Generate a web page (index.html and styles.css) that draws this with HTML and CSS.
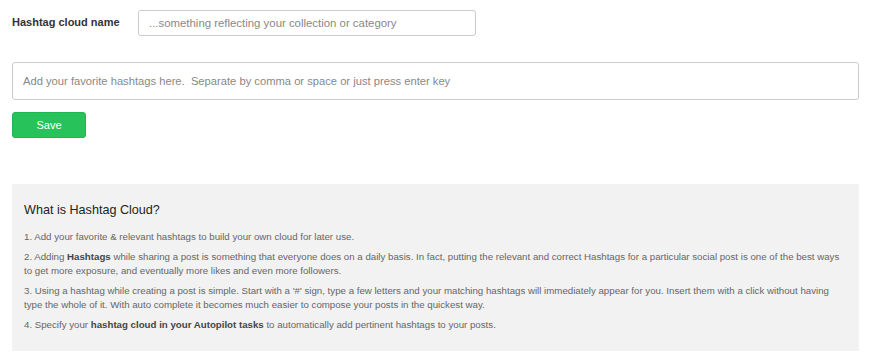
FILE: index.html
```html
<!DOCTYPE html>
<html>
<head>
    <meta charset="utf-8">
    <title>Hashtag Cloud</title>
    <link rel="stylesheet" href="styles.css">
</head>
<body>
    <form class="cloud-form">
        <div class="name-row">
            <label for="cloudName">Hashtag cloud name</label>
            <input id="cloudName" class="name-input" type="text" placeholder="...something reflecting your collection or category">
        </div>

        <input class="tags-input" type="text" placeholder="Add your favorite hashtags here.  Separate by comma or space or just press enter key">

        <button type="button" class="save-btn">Save</button>
    </form>

    <div class="info">
        <h3>What is Hashtag Cloud?</h3>
        <p>1. Add your favorite &amp; relevant hashtags to build your own cloud for later use.</p>
        <p>2. Adding <b>Hashtags</b> while sharing a post is something that everyone does on a daily basis. In fact, putting the relevant and correct Hashtags for a particular social post is one of the best ways to get more exposure, and eventually more likes and even more followers.</p>
        <p>3. Using a hashtag while creating a post is simple. Start with a '#' sign, type a few letters and your matching hashtags will immediately appear for you. Insert them with a click without having type the whole of it. With auto complete it becomes much easier to compose your posts in the quickest way.</p>
        <p>4. Specify your <b>hashtag cloud in your Autopilot tasks</b> to automatically add pertinent hashtags to your posts.</p>
    </div>
</body>
</html>
```

FILE: styles.css
```css
body {
    margin: 0;
    padding: 10px 13px 0 12px;
    background: #fff;
    color: #333;
    font-family: "Liberation Sans", Arial, sans-serif;
}

.cloud-form {
    display: flex;
    flex-direction: column;
    align-items: flex-start;
}

.name-row {
    display: flex;
    align-items: center;
    gap: 17px;
}

.name-row label {
    font-size: 11px;
    font-weight: bold;
    color: #333;
    width: 109px;
    margin-top: -3px;
}

input {
    font-family: inherit;
    border: 1px solid #ccc;
    border-radius: 3px;
    background: #fff;
    box-sizing: border-box;
    outline: none;
}

input::placeholder {
    color: #888;
}

.name-input {
    width: 338px;
    height: 26px;
    padding: 0 10px;
    font-size: 11.4px;
}

.tags-input {
    margin-top: 26px;
    width: 100%;
    height: 38px;
    padding: 0 10px;
    font-size: 11.2px;
}

.save-btn {
    margin-top: 12px;
    width: 74px;
    height: 26px;
    border: 1px solid #1fb552;
    border-radius: 3px;
    background: #27c35a;
    color: #fff;
    font-family: inherit;
    font-size: 11px;
    cursor: pointer;
}

.info {
    margin-top: 46px;
    background: #f2f2f2;
    padding: 19px 12px 12px;
    height: 136px;
}

.info h3 {
    margin: 0 0 13px;
    font-size: 12.6px;
    font-weight: normal;
    color: #222;
}

.info p {
    margin: 0 0 6px;
    font-size: 9.7px;
    line-height: 14px;
    color: #666;
}

.info p b {
    color: #444;
}
```
